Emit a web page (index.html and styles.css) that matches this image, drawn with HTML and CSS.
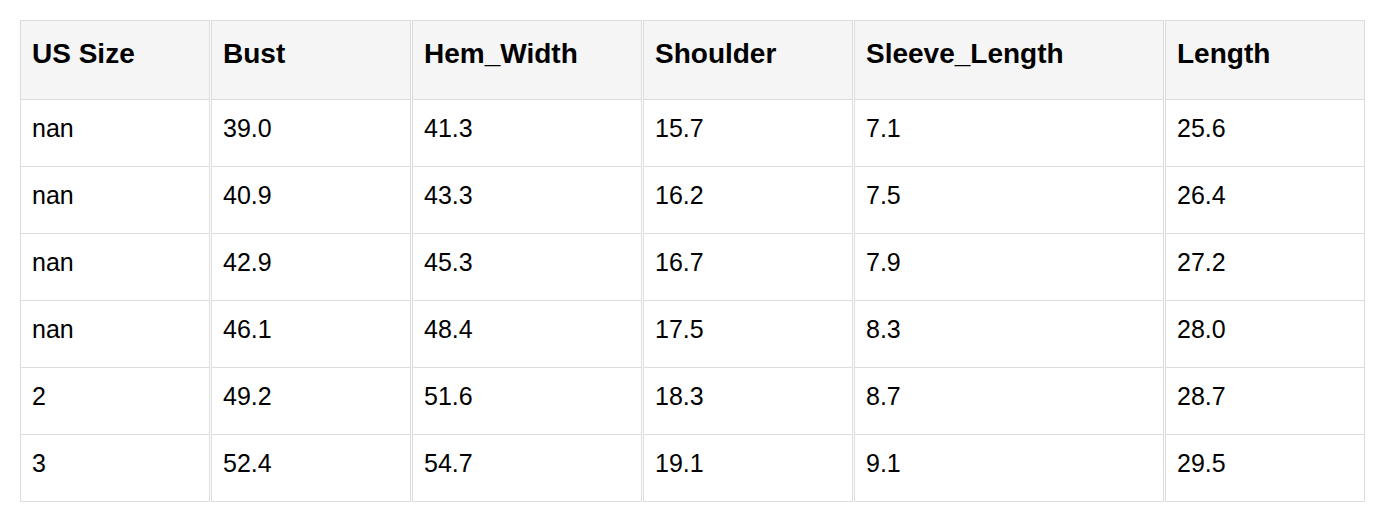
FILE: index.html
```html
<!DOCTYPE html>
<html>
<head>
<meta charset="utf-8">
<link rel="stylesheet" href="styles.css">
</head>
<body>
<table class="size-table">
  <colgroup>
    <col class="c1"><col class="c2"><col class="c3"><col class="c4"><col class="c5"><col class="c6">
  </colgroup>
  <thead>
    <tr><th>US Size</th><th>Bust</th><th>Hem_Width</th><th>Shoulder</th><th>Sleeve_Length</th><th>Length</th></tr>
  </thead>
  <tbody>
    <tr><td>nan</td><td>39.0</td><td>41.3</td><td>15.7</td><td>7.1</td><td>25.6</td></tr>
    <tr><td>nan</td><td>40.9</td><td>43.3</td><td>16.2</td><td>7.5</td><td>26.4</td></tr>
    <tr><td>nan</td><td>42.9</td><td>45.3</td><td>16.7</td><td>7.9</td><td>27.2</td></tr>
    <tr><td>nan</td><td>46.1</td><td>48.4</td><td>17.5</td><td>8.3</td><td>28.0</td></tr>
    <tr><td>2</td><td>49.2</td><td>51.6</td><td>18.3</td><td>8.7</td><td>28.7</td></tr>
    <tr><td>3</td><td>52.4</td><td>54.7</td><td>19.1</td><td>9.1</td><td>29.5</td></tr>
  </tbody>
</table>
</body>
</html>
```
FILE: styles.css
```css
html, body {
  margin: 0;
  padding: 0;
  background: #ffffff;
}
body {
  padding: 20px 19px 20px 20px;
  font-family: "Liberation Sans", Arial, sans-serif;
  color: #000;
}
.size-table {
  border-collapse: separate;
  border-spacing: 1px 0;
  margin: 0 -1px;
  width: calc(100% + 2px);
  table-layout: fixed;
}
.c1 { width: 190px; }
.c2 { width: 200px; }
.c3 { width: 230px; }
.c4 { width: 210px; }
.c5 { width: 310px; }
.c6 { width: 200px; }
.size-table th,
.size-table td {
  border: 1px solid #dcdcdc;
  text-align: left;
  vertical-align: top;
  padding-left: 11px;
  padding-right: 11px;
}
.size-table th {
  background: #f5f5f5;
  font-weight: bold;
  font-size: 28px;
  line-height: 32px;
  padding-top: 17px;
  padding-bottom: 29px;
}
.size-table td {
  border-top: none;
  font-size: 25px;
  line-height: 28px;
  padding-top: 14px;
  padding-bottom: 24px;
}
```
